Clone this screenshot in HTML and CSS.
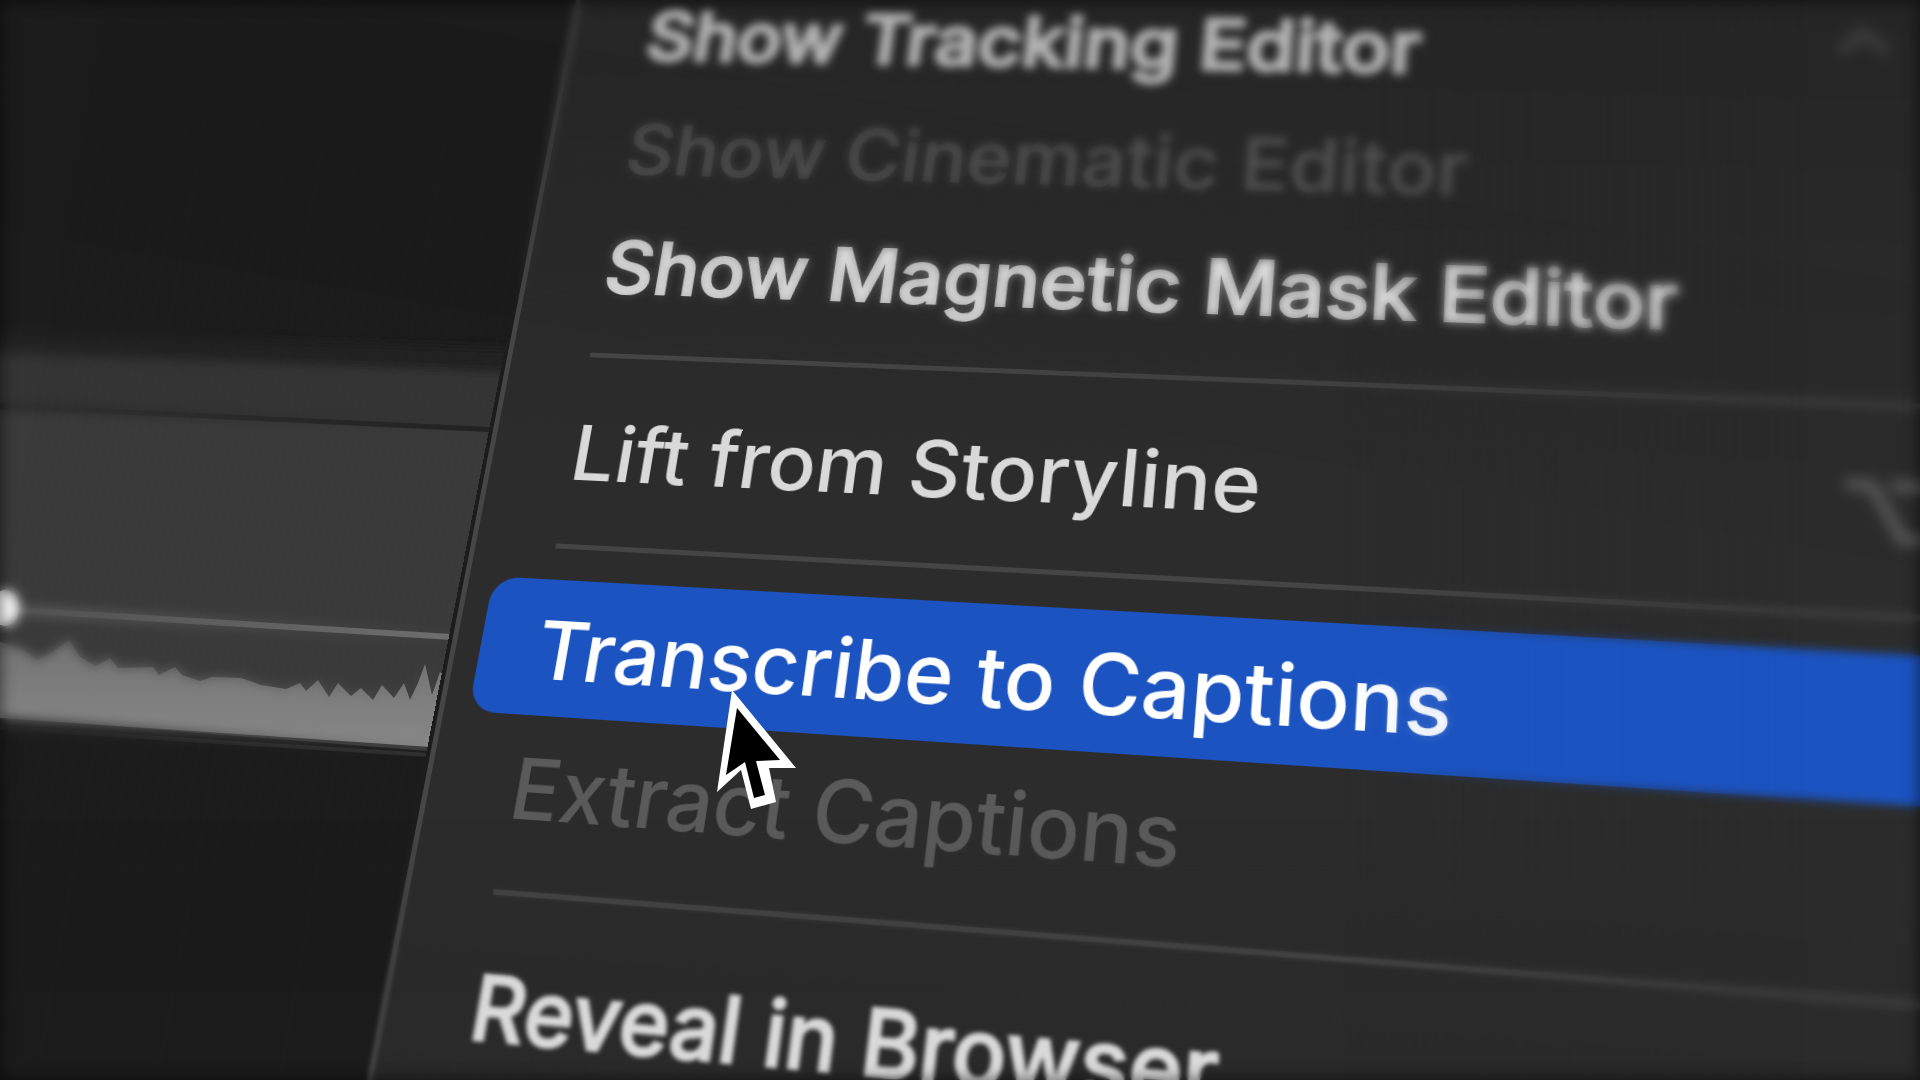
FILE: index.html
```html
<!DOCTYPE html>
<html lang="en">
<head>
<meta charset="utf-8">
<title>Clip menu</title>
<link rel="stylesheet" href="styles.css">
</head>
<body>
<main class="scene">
  <svg class="timeline" viewBox="0 0 1920 1080" preserveAspectRatio="xMinYMin slice" aria-hidden="true">
    <defs>
      <linearGradient id="wave" x1="0" x2="0" y1="640" y2="750" gradientUnits="userSpaceOnUse">
        <stop offset="0" stop-color="#747474"/>
        <stop offset="1" stop-color="#888888"/>
      </linearGradient>
      <filter id="defocus" x="-20%" y="-20%" width="140%" height="140%">
        <feGaussianBlur stdDeviation="5"/>
      </filter>
    </defs>
    <g filter="url(#defocus)">
      <path fill="#232323" d="M-40 330 L560 350 V430 H-40Z"/>
      <path fill="#363636" d="M-40 352 L560 374 V460 H-40Z"/>
    </g>
    <path fill="#3b3b3b" d="M0 410 L540 433 V760 L0 717Z"/>
    <path fill="none" stroke="#222222" stroke-width="5" d="M0 406 L540 432"/>
    <path fill="none" stroke="#707070" stroke-width="6" d="M0 609 L500 640"/>
    <path fill="url(#wave)" d="M0 642 L24 650 37 660 53 652 69 640 80 657 96 666 110 658 118 668 153 667 159 675 175 667 182 675 200 681 212 677 241 678 261 685 286 689 300 683 306 691 318 680 329 697 338 683 351 696 361 688 373 700 382 685 394 698 404 683 410 700 418 683 425 664 432 695 440 672 460 690 V749 L0 718Z"/>
    <path fill="none" stroke="#303030" stroke-width="4" d="M0 728 L460 757"/>
    <ellipse cx="5" cy="608" rx="14" ry="18" fill="#ffffff"/>
  </svg>
  <div class="soft soft-left"></div>

  <ul class="menu" role="menu">
    <li><button class="item far" role="menuitem"><span>Show Tracking Editor</span><kbd>⌃</kbd></button></li>
    <li><button class="item far" role="menuitem" disabled><span>Show Cinematic Editor</span></button></li>
    <li><button class="item near" role="menuitem"><span>Show Magnetic Mask Editor</span></button></li>
    <li class="rule" role="separator"></li>
    <li><button class="item" role="menuitem"><span>Lift from Storyline</span><kbd class="bold">⌥</kbd></button></li>
    <li class="rule" role="separator"></li>
    <li><button class="item active" role="menuitem"><span>Transcribe to Captions</span></button></li>
    <li><button class="item" role="menuitem" disabled><span>Extract Captions</span></button></li>
    <li class="rule" role="separator"></li>
    <li><button class="item near" role="menuitem"><span>Reveal in Browser</span></button></li>
  </ul>

  <div class="soft soft-top"></div>
  <div class="soft soft-right"></div>
  <div class="soft soft-bottom"></div>

  <svg class="pointer" viewBox="0 0 80 120" aria-hidden="true">
    <path fill="#ffffff" d="M16 0 L80 78 L53 78 L60 112 L35 119 L25 80 L1 102Z"/>
    <path fill="#000000" d="M21 18 L64 70 L40 71 L49 105 L38 108 L29 72 L10 85Z"/>
  </svg>
  <div class="vignette"></div>
</main>
</body>
</html>
```
FILE: styles.css
```css
* {
  box-sizing: border-box;
}

body {
  margin: 0;
  background: #1b1b1b;
  font-family: Inter, "Liberation Sans", sans-serif;
}

.scene {
  position: relative;
  width: 100%;
  height: 100vh;
  overflow: hidden;
  background: #1c1c1c;
}

.timeline {
  display: block;
  width: 100%;
  height: 100%;
}

/* The menu lies on a plane that is turned away from the camera. */
.menu {
  position: absolute;
  top: 0;
  left: 0;
  width: 1525px;
  margin: 0;
  padding: 66px 24px 132px;
  list-style: none;
  background: linear-gradient(#242424, #2c2c2c 45%, #2c2c2c 70%, #282828);
  border-left: 5px solid #464646;
  box-shadow: 0 0 0 4px #1c1c1c;
  transform-origin: 0 0;
  transform: matrix3d(
    0.8588, 0.01119, 0, -0.00006658,
    -0.23876, 0.81571, 0, -0.00014013,
    0, 0, 1, 0,
    591, -76, 0, 1);
}

.item {
  display: flex;
  align-items: center;
  justify-content: space-between;
  width: 100%;
  height: 132px;
  padding: 6px 56px 0;
  border: 0;
  border-radius: 26px;
  background: none;
  color: #d9d9d9;
  font: 500 78px/126px Inter, "Liberation Sans", sans-serif;
  text-align: left;
  white-space: nowrap;
}

.item:disabled {
  color: #5a5a5a;
}

.item.active {
  background: #1b53c0;
  color: #ffffff;
}

.item.near {
  -webkit-text-stroke: 2px currentColor;
}

.item.far {
  color: #b2b2b2;
  -webkit-text-stroke: 4px currentColor;
}

.item.far:disabled {
  color: #4e4e4e;
  -webkit-text-stroke: 1px currentColor;
}

.item kbd {
  width: 184px;
  color: #404040;
  font: 500 78px/126px Inter, "DejaVu Sans", sans-serif;
  filter: blur(4px);
}

.item kbd.bold {
  color: #585858;
  -webkit-text-stroke: 4px currentColor;
}

.rule {
  height: 66px;
  padding: 30px 56px;
}

.rule::before {
  content: "";
  display: block;
  height: 5px;
  background: #454545;
}

/* Depth of field: the sides of the view fall out of focus. */
.soft {
  position: absolute;
  inset: 0;
}

.soft-left {
  backdrop-filter: blur(6px);
  mask-image: linear-gradient(100deg, #000 5%, transparent 28%);
}

.soft-top {
  backdrop-filter: blur(4px);
  mask-image: linear-gradient(190deg, #000 20%, transparent 40%);
}

.soft-right {
  backdrop-filter: blur(5px);
  mask-image: linear-gradient(270deg, #000 6%, transparent 30%);
}

.soft-bottom {
  backdrop-filter: blur(2px);
  mask-image: linear-gradient(0deg, #000 8%, transparent 24%);
}

.pointer {
  position: absolute;
  top: 690px;
  left: 716px;
  width: 80px;
  height: 120px;
}

.vignette {
  position: absolute;
  inset: 0;
  box-shadow: inset 0 0 14px 2px rgba(0, 0, 0, 0.5);
}
```
